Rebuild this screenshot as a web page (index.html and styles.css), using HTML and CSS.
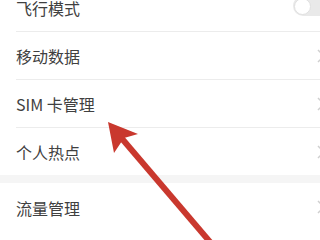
FILE: index.html
```html
<!DOCTYPE html>
<html lang="zh-CN">
<head>
<meta charset="utf-8">
<link rel="stylesheet" href="styles.css">
</head>
<body>
<div class="screen">
  <div class="group">
    <div class="row first">
      <span class="label">飞行模式</span>
      <span class="toggle"><span class="knob"></span></span>
    </div>
    <div class="row">
      <span class="label">移动数据</span>
      <svg class="chev" width="8" height="14" viewBox="0 0 8 14"><path d="M1 1 L7 7 L1 13" fill="none" stroke="#cfcfcf" stroke-width="1.5"/></svg>
    </div>
    <div class="row">
      <span class="label">SIM 卡管理</span>
      <svg class="chev" width="8" height="14" viewBox="0 0 8 14"><path d="M1 1 L7 7 L1 13" fill="none" stroke="#cfcfcf" stroke-width="1.5"/></svg>
    </div>
    <div class="row">
      <span class="label">个人热点</span>
      <svg class="chev" width="8" height="14" viewBox="0 0 8 14"><path d="M1 1 L7 7 L1 13" fill="none" stroke="#cfcfcf" stroke-width="1.5"/></svg>
    </div>
  </div>
  <div class="band"></div>
  <div class="group">
    <div class="row">
      <span class="label">流量管理</span>
      <svg class="chev" width="8" height="14" viewBox="0 0 8 14"><path d="M1 1 L7 7 L1 13" fill="none" stroke="#cfcfcf" stroke-width="1.5"/></svg>
    </div>
  </div>
  <svg class="arrow" width="320" height="240" viewBox="0 0 320 240">
    <line x1="118" y1="134" x2="222" y2="256" stroke="#c9382e" stroke-width="6"/>
    <polygon points="108,122 138,134 124,138 114,153" fill="#c9382e"/>
  </svg>
</div>
</body>
</html>
```

FILE: styles.css
```css
html, body {
  margin: 0;
  padding: 0;
  background: #ffffff;
}
.screen {
  position: relative;
  width: 320px;
  height: 240px;
  overflow: hidden;
  font-family: "Noto Sans CJK SC", "Noto Sans", sans-serif;
}
.group {
  display: flex;
  flex-direction: column;
}
.row {
  height: 48px;
  margin-left: 16px;
  display: flex;
  align-items: center;
  justify-content: space-between;
  border-top: 1px solid #ececec;
  box-sizing: border-box;
}
.group .row:first-child {
  border-top: none;
}
.row.first {
  margin-top: -17px;
}
.label {
  font-size: 16px;
  color: #404040;
  padding-top: 1px;
}
.band {
  height: 8px;
  background: #f5f5f5;
}
.chev {
  margin-right: -5px;
  flex: none;
}
.toggle {
  width: 48px;
  height: 20px;
  border-radius: 10px;
  background: #e9e9e9;
  margin-right: -21px;
  margin-top: -2px;
  display: flex;
  align-items: center;
  padding-left: 1px;
  box-sizing: border-box;
}
.knob {
  width: 15px;
  height: 15px;
  border-radius: 50%;
  background: #ffffff;
  border: 1px solid #e0e0e0;
}
.arrow {
  position: absolute;
  left: 0;
  top: 0;
}
```
